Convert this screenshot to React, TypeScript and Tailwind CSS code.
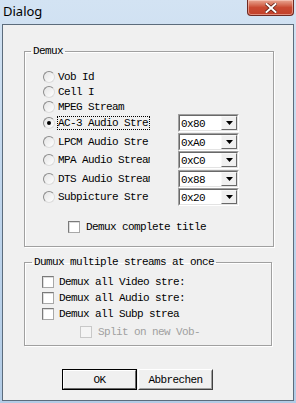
import React from "react";

const mono = "font-[family-name:'Liberation_Mono','Courier_New',monospace] text-[11px] tracking-[-0.6px] leading-[12px] text-black";

function Radio({ checked }: { checked?: boolean }) {
  return (
    <span className="w-[12px] h-[12px] rounded-full border border-t-[#8c8c8c] border-l-[#8c8c8c] border-r-[#dcdcdc] border-b-[#dcdcdc] bg-gradient-to-br from-[#e4e4e4] to-white flex items-center justify-center shrink-0">
      {checked && <span className="w-[4px] h-[4px] rounded-full bg-black" />}
    </span>
  );
}

function Check({ disabled }: { disabled?: boolean }) {
  return (
    <span
      className={`w-[12px] h-[12px] border shrink-0 ${
        disabled
          ? "border-[#c8c8c8] bg-[#f4f4f4]"
          : "border-t-[#7a7a7a] border-l-[#7a7a7a] border-r-[#a8a8a8] border-b-[#a8a8a8] bg-white shadow-[inset_1px_1px_0_#dcdcdc]"
      }`}
    />
  );
}

function Combo({ value, h }: { value: string; h: string }) {
  return (
    <div className={`w-[61px] ${h} flex items-center`}>
      <div className="w-full h-[18px] flex border border-t-[#a0a0a0] border-l-[#a0a0a0] border-r-white border-b-white">
        <div className="flex-1 flex border border-t-[#696969] border-l-[#696969] border-r-[#e3e3e3] border-b-[#e3e3e3] bg-white">
          <span className={`${mono} flex-1 pl-[1px] pt-[2px]`}>{value}</span>
          <span className="w-[16px] h-full bg-[#f0f0f0] border border-t-[#f8f8f8] border-l-[#f8f8f8] border-r-[#696969] border-b-[#696969] flex items-center justify-center">
            <svg width="7" height="4" viewBox="0 0 7 4">
              <path d="M0 0h7L3.5 4z" fill="#000" />
            </svg>
          </span>
        </div>
      </div>
    </div>
  );
}

const radios = [
  { label: "Vob Id", h: "h-[15px]" },
  { label: "Cell I", h: "h-[15px]" },
  { label: "MPEG Stream", h: "h-[15px]" },
];

const streams = [
  { label: "AC-3 Audio Stre", value: "0x80", h: "h-[18px]", checked: true },
  { label: "LPCM Audio Stre", value: "0xA0", h: "h-[19px]" },
  { label: "MPA Audio Stream", value: "0xC0", h: "h-[18px]" },
  { label: "DTS Audio Stream", value: "0x88", h: "h-[19px]" },
  { label: "Subpicture Stre", value: "0x20", h: "h-[18px]" },
];

export default function App() {
  return (
    <div className="w-[296px] h-[403px] bg-gradient-to-b from-[#d3e3f3] via-[#bfd5ec] to-[#b3cce6] flex flex-col overflow-hidden">
      {/* Title bar */}
      <div className="h-[24px] flex items-start justify-between shrink-0">
        <span className="font-[family-name:'Noto_Sans',sans-serif] text-[13px] leading-[16px] text-black pl-[3px] pt-[3px]">Dialog</span>
        <div className="w-[47px] h-[16px] mr-[2px] rounded-b-[4px] border border-[#6e2a22] border-t-0 bg-gradient-to-b from-[#e8a793] via-[#c94a32] to-[#c2402a] flex items-center justify-center shadow-[inset_0_0_0_1px_rgba(255,220,210,0.5)]">
          <svg width="12" height="10" viewBox="0 0 12 10">
            <path d="M1.5 1l9 8M10.5 1l-9 8" stroke="#5a1a10" strokeWidth="3.4" strokeLinecap="square" />
            <path d="M1.5 1l9 8M10.5 1l-9 8" stroke="#fff" strokeWidth="2" strokeLinecap="square" />
          </svg>
        </div>
      </div>

      {/* Client area */}
      <div className="mx-[2px] w-[292px] h-[377px] border border-[#5c6c7c] bg-[#f0f0f0] flex flex-col">
        <div className="pl-[21px] pt-[20px]">
          <fieldset className="w-[250px] border border-[#a0a0a0] shadow-[1px_1px_0_#fff,inset_1px_1px_0_#fff] pb-[12px]">
            <legend className={`${mono} ml-[6px] px-[2px]`}>Demux</legend>
            <div className="flex flex-col pt-[12px]">
              {radios.map((r) => (
                <div key={r.label} className={`${r.h} flex items-center pl-[18px]`}>
                  <Radio />
                  <span className={`${mono} ml-[3px]`}>{r.label}</span>
                </div>
              ))}
              {streams.map((s) => (
                <div key={s.label} className={`${s.h} flex items-center pl-[18px]`}>
                  <Radio checked={s.checked} />
                  <span
                    className={`${mono} ml-[2px] w-[93px] h-[14px] pl-[1px] pt-[1px] whitespace-nowrap overflow-hidden ${
                      s.checked ? "outline outline-1 outline-dotted outline-black -outline-offset-1" : ""
                    }`}
                  >
                    {s.label}
                  </span>
                  <span className="ml-[28px]">
                    <Combo value={s.value} h={s.h} />
                  </span>
                </div>
              ))}
              <div className="h-[14px] mt-[14px] flex items-center pl-[43px]">
                <Check />
                <span className={`${mono} ml-[6px]`}>Demux complete title</span>
              </div>
            </div>
          </fieldset>
        </div>

        <div className="pl-[21px] pt-[9px]">
          <fieldset className="w-[248px] border border-[#a0a0a0] shadow-[1px_1px_0_#fff,inset_1px_1px_0_#fff] pb-[6px]">
            <legend className={`${mono} ml-[7px] px-[2px]`}>Dumux multiple streams at once</legend>
            <div className="flex flex-col pt-[6px]">
              {["Demux all Video stre:", "Demux all Audio stre:", "Demux all Subp strea"].map((t) => (
                <div key={t} className="h-[16px] flex items-center pl-[17px]">
                  <Check />
                  <span className={`${mono} ml-[5px]`}>{t}</span>
                </div>
              ))}
              <div className="h-[14px] mt-[3px] flex items-center pl-[55px]">
                <Check disabled />
                <span className={`${mono} ml-[6px] !text-[#a0a0a0]`}>Split on new Vob-</span>
              </div>
            </div>
          </fieldset>
        </div>

        <div className="flex pl-[59px] pt-[23px]">
          <button className="w-[75px] h-[21px] border border-black bg-[#f0f0f0] p-0">
            <div className="w-full h-full border border-t-white border-l-white border-r-[#696969] border-b-[#696969] flex items-center justify-center">
              <span className={mono}>OK</span>
            </div>
          </button>
          <button className="ml-[1px] w-[75px] h-[21px] border border-t-white border-l-white border-r-[#404040] border-b-[#404040] bg-[#f0f0f0] p-0">
            <div className="w-full h-full border border-t-[#f0f0f0] border-l-[#f0f0f0] border-r-[#a0a0a0] border-b-[#a0a0a0] flex items-center justify-center">
              <span className={mono}>Abbrechen</span>
            </div>
          </button>
        </div>
      </div>
    </div>
  );
}
